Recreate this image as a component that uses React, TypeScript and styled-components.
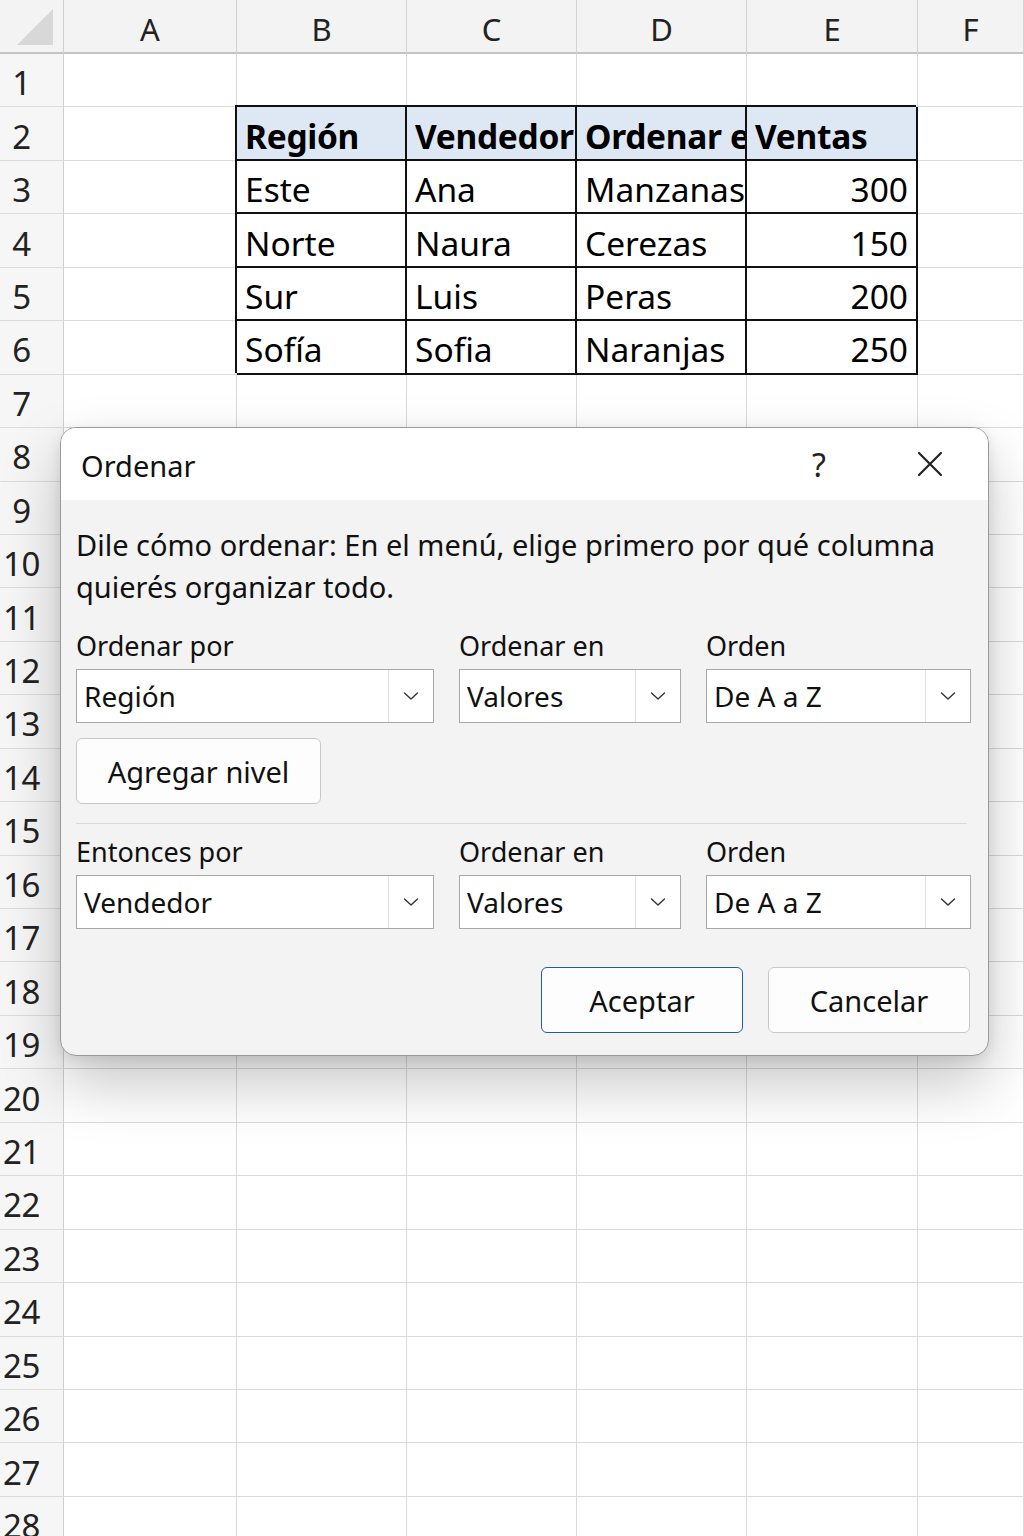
import React from 'react';
import styled, { createGlobalStyle, css } from 'styled-components';

const GlobalStyle = createGlobalStyle`
  html, body { margin: 0; padding: 0; background: #ffffff; overflow: hidden; }
  body { font-family: "Noto Sans", "Open Sans", sans-serif; color: #111; }
  #root { width: 1024px; height: 1536px; overflow: hidden; }
`;

const FONT = `"Noto Sans", "Open Sans", "DejaVu Sans", sans-serif`;

const Page = styled.div`
  position: relative;
  width: 1024px;
  height: 1536px;
  overflow: hidden;
  font-family: ${FONT};
`;

const Sheet = styled.div`
  display: grid;
  grid-template-columns: 64px 173px 170px 170px 170px 171px 1fr;
  grid-template-rows: 54px repeat(28, 53.45px);
  width: 1024px;
`;

const Corner = styled.div`
  box-sizing: border-box;
  background: #f3f3f3;
  border-right: 1px solid #cfcfcf;
  border-bottom: 2px solid #c4c4c4;
  display: flex;
  align-items: flex-end;
  justify-content: flex-end;
  padding: 0 10px 7px 0;
`;

const ColHead = styled.div`
  box-sizing: border-box;
  background: #f3f3f3;
  border-right: 1px solid #d2d2d2;
  border-bottom: 2px solid #c4c4c4;
  display: flex;
  align-items: center;
  justify-content: center;
  font-size: 31px;
  color: #222;
  padding-top: 6px;
`;

const RowHead = styled.div`
  box-sizing: border-box;
  background: #f6f6f6;
  border-right: 1px solid #cfcfcf;
  border-bottom: 1px solid #dcdcdc;
  display: flex;
  align-items: center;
  justify-content: center;
  padding: 5px 20px 0 0;
  font-size: 33px;
  color: #222;
  letter-spacing: -0.5px;
`;

const Cell = styled.div<{ $boxed?: boolean; $head?: boolean; $right?: boolean }>`
  box-sizing: border-box;
  background: #ffffff;
  border-right: 1px solid #dadada;
  border-bottom: 1px solid #dadada;
  display: flex;
  align-items: center;
  justify-content: ${(p) => (p.$right ? 'flex-end' : 'flex-start')};
  padding: 5px 8px 0 8px;
  font-size: 33.5px;
  color: #000;
  white-space: nowrap;
  overflow: hidden;
  ${(p) =>
    p.$boxed &&
    css`
      border-right: 2px solid #111;
      border-bottom: 2px solid #111;
      box-shadow: -2px -2px 0 0 #111;
    `}
  ${(p) =>
    p.$head &&
    css`
      background: #dde8f4;
      font-weight: 700;
      font-size: 33.5px;
      letter-spacing: -0.3px;
      padding-top: 6px;
    `}
`;

const Dialog = styled.div`
  position: absolute;
  left: 60px;
  top: 427px;
  width: 929px;
  height: 629px;
  box-sizing: border-box;
  border: 1px solid #9a9a9a;
  border-radius: 16px;
  background: #f3f3f3;
  overflow: hidden;
  box-shadow: 0 28px 60px rgba(0, 0, 0, 0.22), 0 4px 14px rgba(0, 0, 0, 0.1);
  display: flex;
  flex-direction: column;
  font-family: ${FONT};
`;

const TitleBar = styled.div`
  height: 72px;
  flex: none;
  background: #ffffff;
  display: flex;
  align-items: center;
  padding: 0 26px 0 20px;
`;

const Title = styled.div`
  font-size: 29px;
  color: #111;
  flex: 1;
  padding-top: 2px;
`;

const TitleIcon = styled.div<{ $gap?: number }>`
  width: 64px;
  height: 48px;
  display: flex;
  align-items: center;
  justify-content: center;
  margin-left: ${(p) => p.$gap ?? 0}px;
  font-size: 32px;
  color: #222;
`;

const Body = styled.div`
  flex: 1;
  padding: 24px 17px 0 15px;
  display: flex;
  flex-direction: column;
`;

const Description = styled.p`
  margin: 0;
  font-size: 29px;
  line-height: 42px;
  color: #111;
`;

const FieldRow = styled.div<{ $top: number }>`
  display: grid;
  grid-template-columns: 358px 222px 265px;
  column-gap: 25px;
  margin-top: ${(p) => p.$top}px;
`;

const Field = styled.div`
  display: flex;
  flex-direction: column;
  gap: 6px;
`;

const Label = styled.div`
  font-size: 27px;
  line-height: 34px;
  color: #111;
`;

const Select = styled.div`
  height: 54px;
  box-sizing: border-box;
  background: #ffffff;
  border: 1px solid #a8a8a8;
  display: flex;
  align-items: stretch;
`;

const SelectValue = styled.div`
  flex: 1;
  display: flex;
  align-items: center;
  padding-left: 7px;
  font-size: 28px;
  color: #111;
  white-space: nowrap;
`;

const SelectArrow = styled.div`
  width: 44px;
  border-left: 1px solid #e2e2e2;
  display: flex;
  align-items: center;
  justify-content: center;
`;

const Button = styled.button<{ $primary?: boolean; $w: number }>`
  width: ${(p) => p.$w}px;
  height: 66px;
  box-sizing: border-box;
  background: #fdfdfd;
  border: 1px solid ${(p) => (p.$primary ? '#1f5ca8' : '#c8c8c8')};
  border-radius: 6px;
  font-family: ${FONT};
  font-size: 29px;
  color: #111;
  padding: 0;
  display: flex;
  align-items: center;
  justify-content: center;
`;

const AddRow = styled.div`
  margin-top: 15px;
  display: flex;
`;

const Separator = styled.div`
  margin-top: 19px;
  margin-right: 4px;
  height: 1px;
  background: #dadada;
`;

const Footer = styled.div`
  margin-top: 38px;
  display: flex;
  justify-content: flex-end;
  gap: 25px;
  padding-right: 1px;
`;

const Chevron = () => (
  <svg width="16" height="10" viewBox="0 0 16 10" fill="none">
    <path d="M1.5 2 L8 8 L14.5 2" stroke="#333" strokeWidth="1.4" strokeLinecap="round" strokeLinejoin="round" />
  </svg>
);

const CloseIcon = () => (
  <svg width="26" height="26" viewBox="0 0 26 26" fill="none">
    <path d="M2 2 L24 24 M24 2 L2 24" stroke="#222" strokeWidth="2.2" strokeLinecap="round" />
  </svg>
);

const CornerTriangle = () => (
  <svg width="36" height="36" viewBox="0 0 36 36">
    <polygon points="0,36 36,36 36,0" fill="#d8d8d8" />
  </svg>
);

const COLS = ['A', 'B', 'C', 'D', 'E', 'F'];

type Row = [string, string, string, string];
const TABLE: Record<number, Row> = {
  2: ['Región', 'Vendedor', 'Ordenar en', 'Ventas'],
  3: ['Este', 'Ana', 'Manzanas', '300'],
  4: ['Norte', 'Naura', 'Cerezas', '150'],
  5: ['Sur', 'Luis', 'Peras', '200'],
  6: ['Sofía', 'Sofia', 'Naranjas', '250'],
};

const SelectBox = ({ value }: { value: string }) => (
  <Select>
    <SelectValue>{value}</SelectValue>
    <SelectArrow>
      <Chevron />
    </SelectArrow>
  </Select>
);

export default function App() {
  const rows = Array.from({ length: 28 }, (_, i) => i + 1);
  return (
    <>
      <GlobalStyle />
      <Page>
        <Sheet>
          <Corner>
            <CornerTriangle />
          </Corner>
          {COLS.map((c) => (
            <ColHead key={c}>{c}</ColHead>
          ))}
          {rows.map((r) => (
            <React.Fragment key={r}>
              <RowHead>{r}</RowHead>
              {COLS.map((c, ci) => {
                const data = TABLE[r];
                if (data && ci >= 1 && ci <= 4) {
                  return (
                    <Cell key={c} $boxed $head={r === 2} $right={ci === 4 && r !== 2}>
                      {data[ci - 1]}
                    </Cell>
                  );
                }
                return <Cell key={c} />;
              })}
            </React.Fragment>
          ))}
        </Sheet>

        <Dialog>
          <TitleBar>
            <Title>Ordenar</Title>
            <TitleIcon>?</TitleIcon>
            <TitleIcon $gap={47}>
              <CloseIcon />
            </TitleIcon>
          </TitleBar>
          <Body>
            <Description>
              Dile cómo ordenar: En el menú, elige primero por qué columna quierés organizar todo.
            </Description>
            <FieldRow $top={21}>
              <Field>
                <Label>Ordenar por</Label>
                <SelectBox value="Región" />
              </Field>
              <Field>
                <Label>Ordenar en</Label>
                <SelectBox value="Valores" />
              </Field>
              <Field>
                <Label>Orden</Label>
                <SelectBox value="De A a Z" />
              </Field>
            </FieldRow>
            <AddRow>
              <Button $w={245}>Agregar nivel</Button>
            </AddRow>
            <Separator />
            <FieldRow $top={11}>
              <Field>
                <Label>Entonces por</Label>
                <SelectBox value="Vendedor" />
              </Field>
              <Field>
                <Label>Ordenar en</Label>
                <SelectBox value="Valores" />
              </Field>
              <Field>
                <Label>Orden</Label>
                <SelectBox value="De A a Z" />
              </Field>
            </FieldRow>
            <Footer>
              <Button $primary $w={202}>Aceptar</Button>
              <Button $w={202}>Cancelar</Button>
            </Footer>
          </Body>
        </Dialog>
      </Page>
    </>
  );
}
